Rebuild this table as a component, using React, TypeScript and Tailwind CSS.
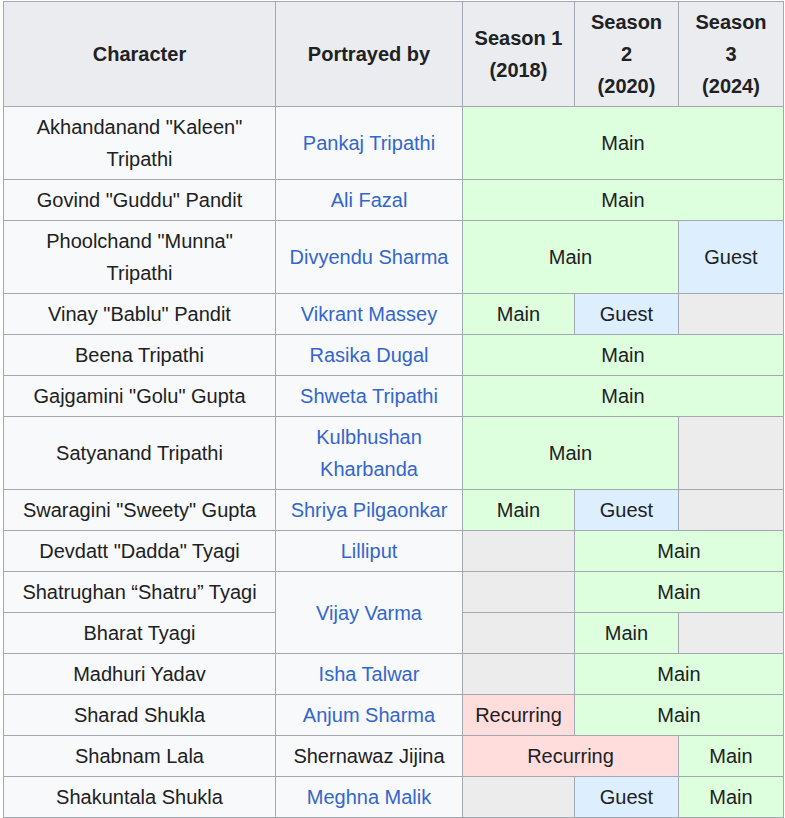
type Cell = { text?: string; kind: 'main' | 'guest' | 'rec' | 'none'; span?: number };

type Row = {
  character: string;
  actor?: string;
  link?: boolean;
  actorRows?: number;
  seasons: Cell[];
};

const rows: Row[] = [
  { character: 'Akhandanand "Kaleen" Tripathi', actor: 'Pankaj Tripathi', link: true, seasons: [{ text: 'Main', kind: 'main', span: 3 }] },
  { character: 'Govind "Guddu" Pandit', actor: 'Ali Fazal', link: true, seasons: [{ text: 'Main', kind: 'main', span: 3 }] },
  {
    character: 'Phoolchand "Munna" Tripathi',
    actor: 'Divyendu Sharma',
    link: true,
    seasons: [{ text: 'Main', kind: 'main', span: 2 }, { text: 'Guest', kind: 'guest' }],
  },
  {
    character: 'Vinay "Bablu" Pandit',
    actor: 'Vikrant Massey',
    link: true,
    seasons: [{ text: 'Main', kind: 'main' }, { text: 'Guest', kind: 'guest' }, { kind: 'none' }],
  },
  { character: 'Beena Tripathi', actor: 'Rasika Dugal', link: true, seasons: [{ text: 'Main', kind: 'main', span: 3 }] },
  { character: 'Gajgamini "Golu" Gupta', actor: 'Shweta Tripathi', link: true, seasons: [{ text: 'Main', kind: 'main', span: 3 }] },
  {
    character: 'Satyanand Tripathi',
    actor: 'Kulbhushan Kharbanda',
    link: true,
    seasons: [{ text: 'Main', kind: 'main', span: 2 }, { kind: 'none' }],
  },
  {
    character: 'Swaragini "Sweety" Gupta',
    actor: 'Shriya Pilgaonkar',
    link: true,
    seasons: [{ text: 'Main', kind: 'main' }, { text: 'Guest', kind: 'guest' }, { kind: 'none' }],
  },
  { character: 'Devdatt "Dadda" Tyagi', actor: 'Lilliput', link: true, seasons: [{ kind: 'none' }, { text: 'Main', kind: 'main', span: 2 }] },
  {
    character: 'Shatrughan \u201cShatru\u201d Tyagi',
    actor: 'Vijay Varma',
    link: true,
    actorRows: 2,
    seasons: [{ kind: 'none' }, { text: 'Main', kind: 'main', span: 2 }],
  },
  { character: 'Bharat Tyagi', seasons: [{ kind: 'none' }, { text: 'Main', kind: 'main' }, { kind: 'none' }] },
  { character: 'Madhuri Yadav', actor: 'Isha Talwar', link: true, seasons: [{ kind: 'none' }, { text: 'Main', kind: 'main', span: 2 }] },
  {
    character: 'Sharad Shukla',
    actor: 'Anjum Sharma',
    link: true,
    seasons: [{ text: 'Recurring', kind: 'rec' }, { text: 'Main', kind: 'main', span: 2 }],
  },
  {
    character: 'Shabnam Lala',
    actor: 'Shernawaz Jijina',
    seasons: [{ text: 'Recurring', kind: 'rec', span: 2 }, { text: 'Main', kind: 'main' }],
  },
  {
    character: 'Shakuntala Shukla',
    actor: 'Meghna Malik',
    link: true,
    seasons: [{ kind: 'none' }, { text: 'Guest', kind: 'guest' }, { text: 'Main', kind: 'main' }],
  },
];

const bg: Record<Cell['kind'], string> = {
  main: 'bg-[#ddffdd]',
  guest: 'bg-[#ddeeff]',
  rec: 'bg-[#ffdddd]',
  none: 'bg-[#ececec]',
};

const td = 'border border-[#a2a9b1] px-2 py-1 text-center align-middle';

export default function App() {
  return (
    <div className="min-h-screen bg-white pt-px pl-[3px]" style={{ fontFamily: '"Liberation Sans", Arial, sans-serif' }}>
      <table className="w-[780px] table-fixed border-collapse bg-[#f8f9fa] text-[20px] leading-8 text-[#202122]">
        <colgroup>
          <col className="w-[272px]" />
          <col className="w-[187px]" />
          <col className="w-[112px]" />
          <col className="w-[104px]" />
          <col className="w-[105px]" />
        </colgroup>
        <thead>
          <tr className="bg-[#eaecf0] font-bold">
            <th className={td}>Character</th>
            <th className={td}>Portrayed by</th>
            <th className={td}>
              Season 1<br />(2018)
            </th>
            <th className={td}>
              Season<br />2<br />(2020)
            </th>
            <th className={td}>
              Season<br />3<br />(2024)
            </th>
          </tr>
        </thead>
        <tbody>
          {rows.map((r) => (
            <tr key={r.character}>
              <td className={td}>{r.character}</td>
              {r.actor && (
                <td className={td} rowSpan={r.actorRows}>
                  {r.link ? <a className="text-[#3366cc]">{r.actor}</a> : r.actor}
                </td>
              )}
              {r.seasons.map((s, i) => (
                <td key={i} colSpan={s.span} className={`${td} ${bg[s.kind]}`}>
                  {s.text}
                </td>
              ))}
            </tr>
          ))}
        </tbody>
      </table>
    </div>
  );
}
